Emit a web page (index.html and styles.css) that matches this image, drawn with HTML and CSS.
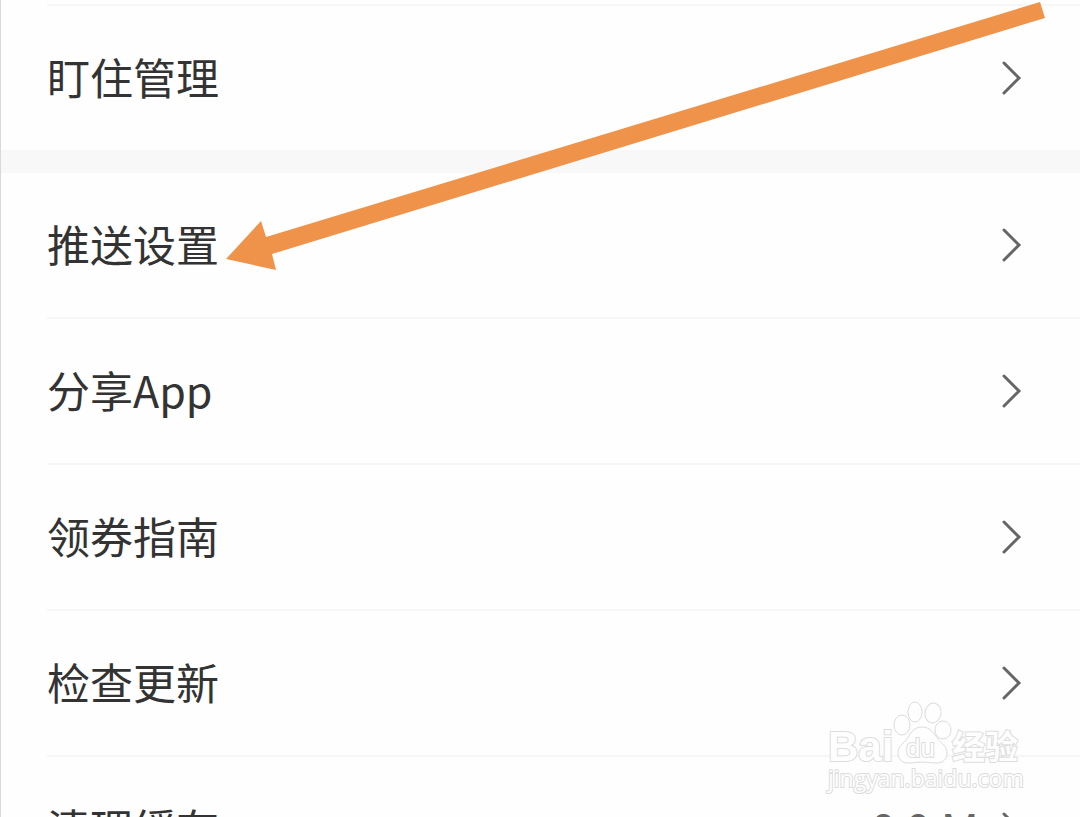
FILE: index.html
```
<!DOCTYPE html>
<html lang="zh-CN">

<head>
    <title>设置</title>
    <meta charset="UTF-8">
    <meta name="viewport" content="width=device-width, initial-scale=1">
    <link rel="stylesheet" href="styles.css">
</head>

<body>
    <div class="page">
        <ul class="group">
            <li><a class="item" href="#"><span class="name">盯住管理</span><svg class="arrow" viewBox="0 0 20 34"><path d="M2 2L17 17L2 32"/></svg></a></li>
        </ul>
        <ul class="group">
            <li><a class="item" href="#"><span class="name">推送设置</span><svg class="arrow" viewBox="0 0 20 34"><path d="M2 2L17 17L2 32"/></svg></a></li>
            <li><a class="item" href="#"><span class="name">分享App</span><svg class="arrow" viewBox="0 0 20 34"><path d="M2 2L17 17L2 32"/></svg></a></li>
            <li><a class="item" href="#"><span class="name">领券指南</span><svg class="arrow" viewBox="0 0 20 34"><path d="M2 2L17 17L2 32"/></svg></a></li>
            <li><a class="item" href="#"><span class="name">检查更新</span><svg class="arrow" viewBox="0 0 20 34"><path d="M2 2L17 17L2 32"/></svg></a></li>
            <li><a class="item" href="#"><span class="name">清理缓存</span><span class="value">0.0 M</span><svg class="arrow" viewBox="0 0 20 34"><path d="M2 2L17 17L2 32"/></svg></a></li>
        </ul>

        <!-- 指向推送设置的箭头 -->
        <svg class="pointer" viewBox="0 0 820 270">
            <path d="M0 259L35 221L40 237L814 2L819 18L46 254L50 270Z"/>
        </svg>

        <!-- 水印 -->
        <svg class="watermark" viewBox="0 0 200 100">
            <ellipse cx="77" cy="25" rx="8" ry="10"/>
            <ellipse cx="90" cy="12" rx="7" ry="10"/>
            <ellipse cx="108" cy="13" rx="8" ry="10" transform="rotate(10 108 13)"/>
            <ellipse cx="118" cy="30" rx="8" ry="9"/>
            <path d="M97 27C88 27 85 34 82 39C79 43 73 46 73 53C73 59 77 63 83 63C89 63 93 62 97 62C102 62 106 63 112 63C118 63 122 59 122 53C122 46 116 43 113 39C109 34 106 27 97 27Z"/>
            <text class="brand" x="3" y="61">Bai</text>
            <text class="du" x="81" y="57">du</text>
            <text class="cn" x="127" y="59">经验</text>
            <text class="site" x="3" y="87">jingyan.baidu.com</text>
        </svg>
    </div>
</body>

</html>
```
FILE: styles.css
```
* {
    box-sizing: border-box;
}

body {
    margin: 0;
    background: #fefefe;
    color: #333;
    font-family: "Noto Sans CJK SC", sans-serif;
    font-size: 43px;
    line-height: 64px;
}

.page {
    position: relative;
    height: 100vh;
    overflow: hidden;
    border-left: 1px solid #d8d8d8;
}

.group {
    margin: 0;
    padding: 0;
    list-style: none;
}

.group:first-child {
    padding-top: 4px;
    border-bottom: 23px solid #f8f8f8;
}

.group li {
    margin-left: 46px;
    border-top: 2px solid #f6f6f6;
}

.group + .group li:first-child {
    border-top: 0;
}

.item {
    display: flex;
    align-items: center;
    height: 144px;
    padding-right: 58px;
    color: #333;
    text-decoration: none;
}

.name {
    flex: 1;
    padding-bottom: 4px;
}

.value {
    margin-right: 24px;
    color: #666;
    font-family: Inter, sans-serif;
    font-size: 40px;
}

.arrow {
    width: 20px;
    height: 34px;
    fill: none;
    stroke: #666;
    stroke-width: 3;
    stroke-linecap: round;
}

.pointer {
    position: absolute;
    top: 0;
    left: 225px;
    width: 76%;
    fill: #f0934a;
}

.watermark {
    position: absolute;
    right: 55px;
    bottom: 17px;
    width: 200px;
    height: 100px;
    fill: #fefefe;
    stroke: #dcdcdc;
    stroke-width: 1;
}

.watermark text {
    paint-order: stroke;
    stroke-width: 2;
}

.brand,
.du {
    font-family: "Liberation Sans", sans-serif;
    font-size: 42px;
    font-weight: bold;
}

.du {
    font-size: 26px;
    font-weight: normal;
}

.cn {
    font-size: 33px;
    font-weight: bold;
}

.site {
    font-family: "Open Sans", sans-serif;
    font-size: 23px;
}
```
